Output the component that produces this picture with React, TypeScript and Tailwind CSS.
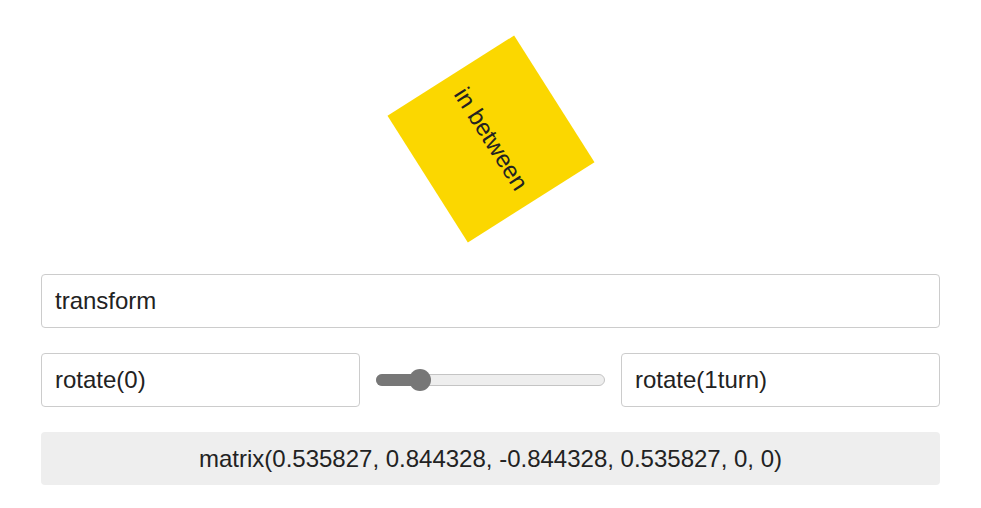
import React from "react";

const turn = 0.16;
const angle = turn * 360;
const rad = (angle * Math.PI) / 180;
const fmt = (n: number) => {
  const r = Math.round(n * 1e6) / 1e6;
  return r === 0 ? "0" : String(r);
};
const matrix = `matrix(${fmt(Math.cos(rad))}, ${fmt(Math.sin(rad))}, ${fmt(-Math.sin(rad))}, ${fmt(Math.cos(rad))}, 0, 0)`;

export default function App() {
  return (
    <div className="min-h-screen bg-white text-[24px] text-[#222] font-['Liberation_Sans',Arial,sans-serif]">
      <div className="mx-[41px] w-[899px]">
        {/* Stage */}
        <div className="flex h-[274px] justify-center pt-16">
          <div
            className="flex h-[150px] w-[150px] items-center justify-center bg-[#fbd700] text-[24px] text-[#222]"
            style={{ transform: `rotate(${angle}deg)` }}
          >
            in between
          </div>
        </div>

        {/* Property */}
        <div className="flex h-[54px] items-center rounded border border-[#ccc] px-[13px]">
          transform
        </div>

        {/* From / slider / To */}
        <div className="mt-[25px] grid grid-cols-[1fr_229px_1fr] items-center gap-4">
          <div className="flex h-[54px] items-center rounded border border-[#ccc] px-[13px]">
            rotate(0)
          </div>
          <div className="relative h-[12px] w-[229px] rounded-full border border-[#c4c4c4] bg-[#eeeeee]">
            <div className="absolute left-[-1px] top-[-1px] h-[12px] w-[48px] rounded-full bg-[#777]" />
            <div className="absolute left-[32px] top-[-6px] h-[22px] w-[22px] rounded-full bg-[#777]" />
          </div>
          <div className="flex h-[54px] items-center rounded border border-[#ccc] px-[13px]">
            rotate(1turn)
          </div>
        </div>

        {/* Result */}
        <div className="mt-[25px] flex h-[53px] items-center justify-center rounded-sm bg-[#eeeeee]">
          {matrix}
        </div>
      </div>
    </div>
  );
}
